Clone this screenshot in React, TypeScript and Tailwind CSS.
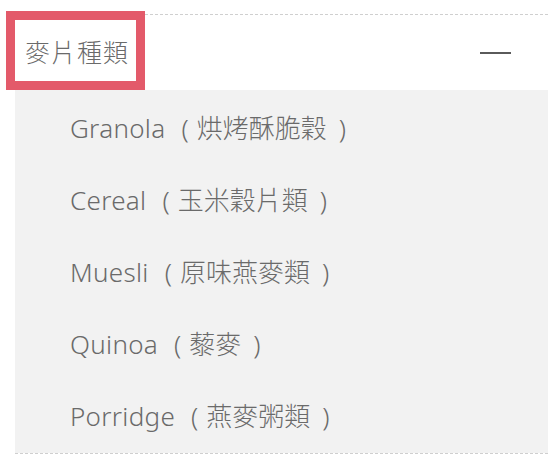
const items = [
  { en: 'Granola', zh: '烘烤酥脆穀' },
  { en: 'Cereal', zh: '玉米穀片類' },
  { en: 'Muesli', zh: '原味燕麥類' },
  { en: 'Quinoa', zh: '藜麥' },
  { en: 'Porridge', zh: '燕麥粥類' },
];

export default function App() {
  return (
    <div className="w-[558px] h-[465px] bg-white pt-[14px] font-['Noto_Sans','Noto_Sans_CJK_TC',sans-serif] text-[#6a6a6a]">
      <div className="relative ml-[15px] w-[533px] border-t border-b border-dashed border-[#cfcfcf]">
        <div className="flex h-[75px] items-center justify-between pl-[10px] pr-[37px]">
          <span className="text-[25px] font-light leading-none tracking-[1px]">麥片種類</span>
          <span className="block h-[2px] w-[31px] bg-[#5a5a5a]" />
        </div>
        <div className="bg-[#f2f2f2] pt-[2px] pb-[1px]">
          {items.map((it) => (
            <div key={it.en} className="flex h-[72px] items-center pl-[55px] text-[26px] font-light leading-none">
              <span className="tracking-[0.3px]">{it.en}</span>
              <span className="ml-[16px] mr-[8px]">(</span>
              <span>{it.zh}</span>
              <span className="ml-[12px]">)</span>
            </div>
          ))}
        </div>
        <div className="pointer-events-none absolute left-[-9px] top-[-4px] h-[79px] w-[139px] border-[9px] border-[#e35a6a]" />
      </div>
    </div>
  );
}
